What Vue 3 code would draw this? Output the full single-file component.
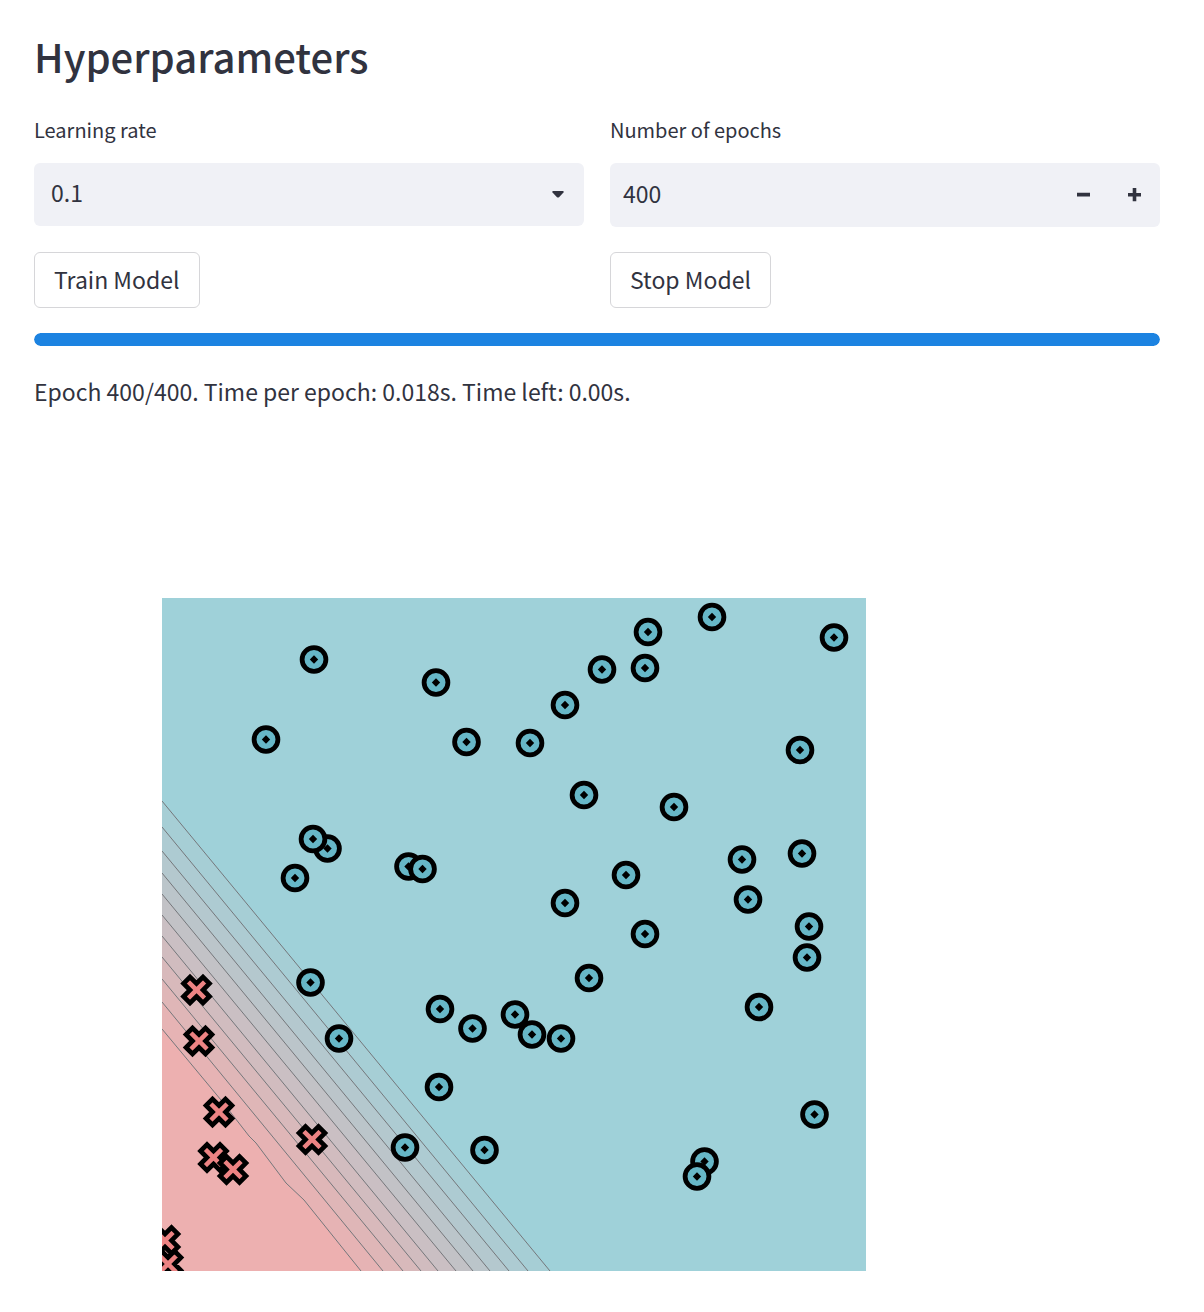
<script setup>
import { computed, ref } from 'vue'

const rate = ref('0.1')
const rates = ['0.0001', '0.001', '0.01', '0.03', '0.1', '0.3', '1']
const epochs = ref(400)

// Plot area: 704 x 673 units, origin at its top left corner.
// Contour lines run from the left edge to the bottom edge, outermost first.
const contourEnds = [
  [203, 388], [229, 366], [253, 347], [275, 328], [296, 311], [317, 294],
  [338, 276], [359, 259], [381, 241], [404, 221],
]
const lastContour = '0,431 59,502 87,538 94,545 124,585 142,602 199,673'
const teal = [159, 209, 217]
const red = [237, 176, 176]

const contours = computed(() => {
  const lines = [...contourEnds.map(([y, x]) => `0,${y} ${x},673`), lastContour]
  return lines.map((line, i) => {
    const t = (i + 1) / lines.length
    const rgb = teal.map((c, k) => Math.round(c + (red[k] - c) * t))
    return { line, area: `${line} 0,673`, fill: `rgb(${rgb.join(',')})` }
  })
})

const circles = [
  [550, 19], [486, 34], [672, 39.5], [483, 70], [440, 71.5], [152, 61.5],
  [274, 84.5], [403, 107], [104, 141.5], [304.5, 144], [368, 145], [638, 152],
  [422, 197], [512, 209], [165.5, 250.5], [151, 241], [640, 255.5], [580, 261.5],
  [246.5, 268.5], [260.5, 271], [133, 280], [464, 277], [586, 301.5], [403, 305],
  [647, 328.5], [483, 336], [645, 359.5], [427, 380], [148.5, 384.5], [597, 409],
  [278, 411], [353, 416.5], [310.5, 430.5], [370, 436.5], [177, 440.5], [399, 440.5],
  [277, 489], [652.5, 516.5], [243, 549.5], [322.5, 552], [542.5, 563.5], [535, 578.5],
]
const crosses = [
  [34.5, 392], [37, 443], [57, 514], [150, 541.5], [51.5, 559.5], [71, 571.5],
  [3, 642.5], [6, 666],
]
</script>

<template>
  <main class="page">
    <h2>Hyperparameters</h2>

    <div class="columns">
      <div class="field">
        <label for="rate">Learning rate</label>
        <div class="control select">
          <select id="rate" v-model="rate">
            <option v-for="r in rates" :key="r">{{ r }}</option>
          </select>
          <svg class="caret" viewBox="0 0 12 7" aria-hidden="true">
            <path d="M1 0H11Q12.4 .6 11.500 1.600L7 6.200Q6 7 5 6.200L.5 1.600Q-.4 .6 1 0Z" />
          </svg>
        </div>
      </div>
      <div class="field">
        <label for="epochs">Number of epochs</label>
        <div class="control number">
          <input id="epochs" v-model.number="epochs" type="number" min="1">
          <button type="button" aria-label="Decrease" @click="epochs--">
            <svg viewBox="0 0 14 14" aria-hidden="true"><path d="M0 4.800H13V8.400H0Z" /></svg>
          </button>
          <button type="button" aria-label="Increase" @click="epochs++">
            <svg viewBox="0 0 14 14" aria-hidden="true">
              <path d="M4.700 0H8.300V5H13V8.600H8.300V13.200H4.700V8.600H0V5H4.700Z" />
            </svg>
          </button>
        </div>
      </div>
    </div>

    <div class="columns actions">
      <div><button type="button" class="action">Train Model</button></div>
      <div><button type="button" class="action">Stop Model</button></div>
    </div>

    <div class="progress" role="progressbar" aria-label="Training" aria-valuenow="100">
      <div class="bar" :style="{ width: '100%' }"></div>
    </div>
    <p class="status">Epoch 400/400. Time per epoch: 0.018s. Time left: 0.00s.</p>

    <figure class="chart">
      <svg viewBox="0 0 704 673" role="img" aria-label="Decision boundary">
        <defs>
          <g id="dot">
            <circle r="11.900" fill="#67b7c7" stroke="#000" stroke-width="4.800" />
            <path d="M0-4.200L4.200 0 0 4.200-4.200 0Z" />
          </g>
          <path
            id="cross"
            d="M0 6.500L6.500 13 13 6.500 6.500 0 13-6.500 6.500-13 0-6.500-6.500-13-13-6.500-6.500 0-13 6.500-6.500 13Z"
            fill="#ec8383" stroke="#000" stroke-width="4.600"
          />
        </defs>
        <rect width="704" height="673" fill="#9fd1d9" />
        <polygon v-for="c in contours" :key="c.line" :points="c.area" :fill="c.fill" />
        <polyline v-for="c in contours" :key="c.line" class="line" :points="c.line" />
        <use v-for="([x, y], i) in circles" :key="`o${i}`" href="#dot" :x="x" :y="y" />
        <use v-for="([x, y], i) in crosses" :key="`x${i}`" href="#cross" :x="x" :y="y" />
      </svg>
    </figure>
  </main>
</template>

<style>
body {
  margin: 0;
  background: #fff;
}
</style>

<style scoped>
* {
  box-sizing: border-box;
}

.page {
  padding: 30px 44px 40px 34px;
  color: #31333f;
  font-family: "Noto Sans CJK SC", "Noto Sans", sans-serif;
  font-size: 23px;
  line-height: 40px;
}

h2 {
  margin: 0 0 32px;
  font-size: 40px;
  font-weight: 500;
  line-height: 52px;
}

.columns {
  display: grid;
  grid-template-columns: 1fr 1fr;
  gap: 26px;
}

label {
  display: block;
  margin-bottom: 17px;
  font-size: 20px;
  line-height: 32px;
}

.control {
  display: flex;
  align-items: center;
  height: 63px;
  overflow: hidden;
  border-radius: 6px;
  background: #f0f1f6;
}

select,
input,
button {
  margin: 0;
  border: 0;
  background: transparent;
  color: inherit;
  font: inherit;
}

.select {
  position: relative;
}

.number {
  height: 64px;
}

select {
  width: 100%;
  height: 100%;
  padding: 0 48px 5px 17px;
  appearance: none;
}

.caret {
  position: absolute;
  right: 20px;
  width: 12px;
  height: 7px;
  pointer-events: none;
}

svg {
  display: block;
}

.control svg {
  fill: #31333f;
}

input {
  flex: 1;
  min-width: 0;
  height: 100%;
  padding: 0 13px 4px;
  appearance: textfield;
}

input::-webkit-inner-spin-button {
  display: none;
}

.number button {
  display: grid;
  place-items: center;
  width: 51px;
  height: 100%;
  padding: 0;
}

.number button svg {
  width: 14px;
  height: 14px;
}

.actions {
  margin-top: 25px;
}

.action {
  display: block;
  height: 56px;
  padding: 0 19px 2px;
  border: 1px solid #d6d6d9;
  border-radius: 6px;
  background: #fff;
}

.progress {
  height: 13px;
  margin-top: 25px;
  overflow: hidden;
  border-radius: 7px;
  background: #f0f1f6;
}

.bar {
  height: 100%;
  border-radius: 7px;
  background: #1c83e1;
}

.status {
  margin: 25px 0 0;
}

.chart {
  max-width: 704px;
  margin: 187px 0 0 128px;
}

.chart svg {
  width: 100%;
  overflow: hidden;
}

.line {
  fill: none;
  stroke: #75777b;
  stroke-width: 1;
}
</style>
